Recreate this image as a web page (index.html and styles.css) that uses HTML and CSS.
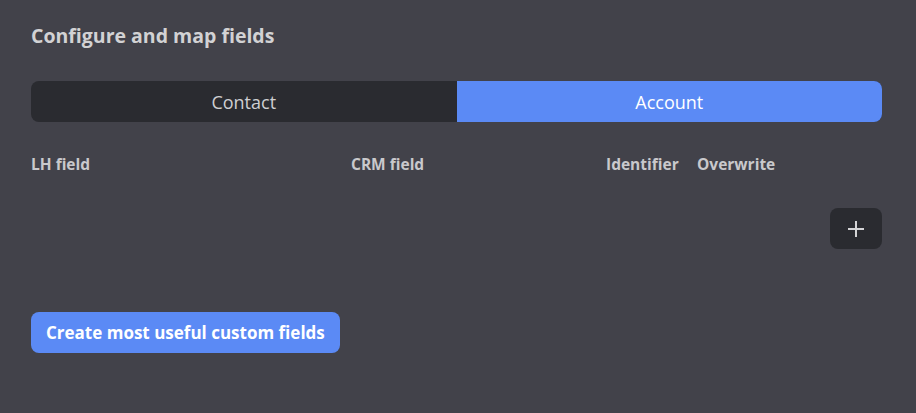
FILE: index.html
```html
<!DOCTYPE html>
<html>
<head>
<meta charset="utf-8">
<link rel="stylesheet" href="styles.css">
</head>
<body>
<div class="panel">
  <h2 class="title">Configure and map fields</h2>
  <div class="tabs">
    <div class="tab">Contact</div>
    <div class="tab active">Account</div>
  </div>
  <div class="head">
    <div>LH field</div>
    <div>CRM field</div>
    <div>Identifier</div>
    <div>Overwrite</div>
  </div>
  <div class="addrow">
    <button class="add" aria-label="Add">
      <svg width="18" height="18" viewBox="0 0 18 18"><path d="M9 1v16M1 9h16" stroke="#d4d4d6" stroke-width="2" fill="none"/></svg>
    </button>
  </div>
  <button class="create">Create most useful custom fields</button>
</div>
</body>
</html>
```
FILE: styles.css
```css
html, body {
  margin: 0;
  background: #42424a;
  font-family: "Open Sans", Lato, sans-serif;
}
.panel {
  padding: 22px 34px 0 31px;
  width: 851px;
}
.title {
  margin: 0;
  font-size: 19.5px;
  font-weight: 700;
  color: #d2d2d4;
  line-height: 28px;
}
.tabs {
  display: flex;
  margin-top: 31px;
  height: 41px;
  border-radius: 8px;
  overflow: hidden;
  background: #2a2b30;
}
.tab {
  flex: 1;
  display: flex;
  align-items: center;
  justify-content: center;
  font-size: 18px;
  color: #cfcfd2;
}
.tab.active {
  background: #5b8af5;
  color: #ffffff;
}
.head {
  display: grid;
  grid-template-columns: 320px 255px 91px 1fr;
  margin-top: 32px;
  font-size: 15.5px;
  font-weight: 700;
  color: #c9c9cc;
  line-height: 20px;
}
.addrow {
  display: flex;
  justify-content: flex-end;
  margin-top: 34px;
}
.add {
  width: 52px;
  height: 41px;
  border: none;
  border-radius: 8px;
  background: #2a2b30;
  display: flex;
  align-items: center;
  justify-content: center;
  padding: 0;
}
.create {
  margin-top: 63px;
  height: 41px;
  padding: 0 15px;
  border: none;
  border-radius: 8px;
  background: #5b8af5;
  color: #ffffff;
  font-family: "Open Sans", Lato, sans-serif;
  font-size: 17px;
  font-weight: 700;
}
```
